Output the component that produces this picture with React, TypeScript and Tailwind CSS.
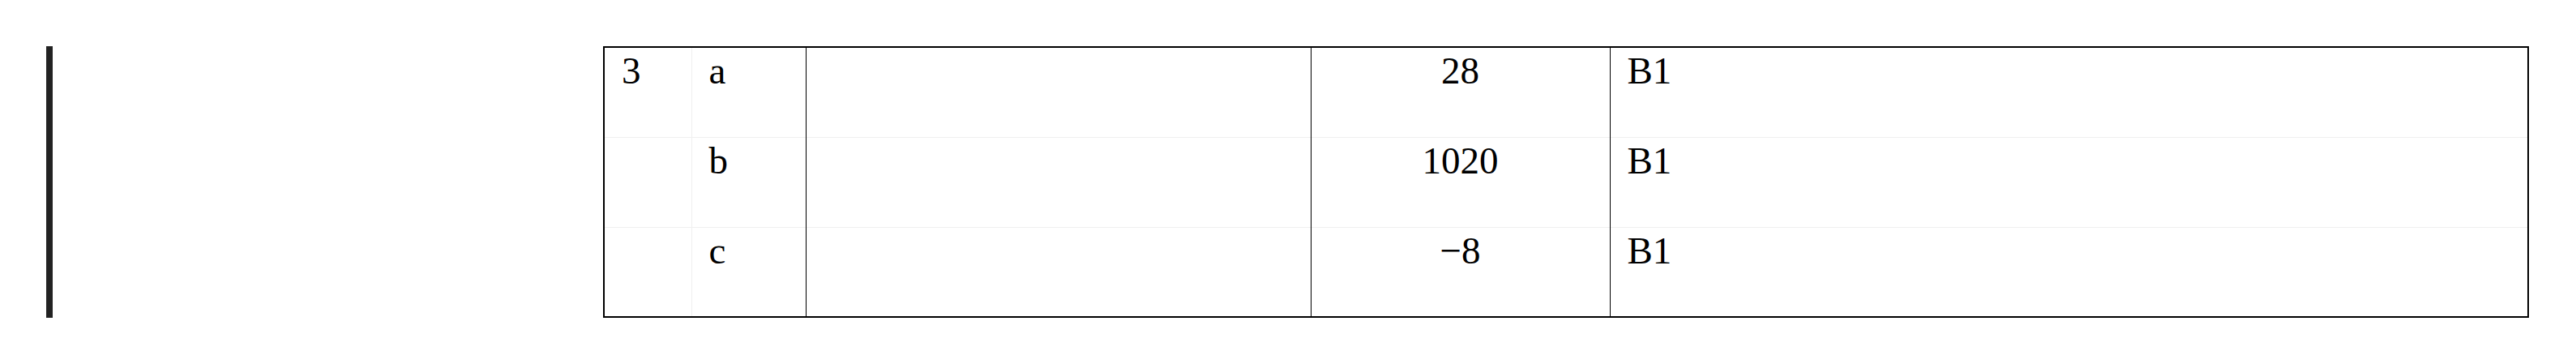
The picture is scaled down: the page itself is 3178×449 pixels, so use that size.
import React from 'react';

interface Row {
  q: string;
  part: string;
  answer: string;
  mark: string;
}

const ROWS: Row[] = [
  { q: '3', part: 'a', answer: '28', mark: 'B1' },
  { q: '', part: 'b', answer: '1020', mark: 'B1' },
  { q: '', part: 'c', answer: '\u22128', mark: 'B1' },
];

export default function App() {
  return (
    <div className="flex items-start bg-white pt-[57px] w-[3178px] h-[449px] font-['Liberation_Serif',serif] text-[47px] text-black">
      <div className="ml-[57px] w-[8px] h-[335px] bg-[#222222] shrink-0" />

      <table className="ml-[679px] w-[2376px] table-fixed border-collapse border-2 border-black">
        <colgroup>
          <col className="w-[108px]" />
          <col className="w-[141px]" />
          <col className="w-[623px]" />
          <col className="w-[369px]" />
          <col />
        </colgroup>
        <tbody>
          {ROWS.map((row, i) => (
            <tr key={i} className="h-[111px] border-t border-[#f0f0f0] first:border-t-0">
              <td className="align-top pl-[21px] pt-[1px] leading-[54px] border-r border-r-[#f0f0f0]">{row.q}</td>
              <td className="align-top pl-[21px] pt-[1px] leading-[54px] border-r border-r-black">{row.part}</td>
              <td className="align-top pt-[1px] leading-[54px] border-r border-r-black" />
              <td className="align-top pt-[1px] leading-[54px] text-center border-r border-r-black">{row.answer}</td>
              <td className="align-top pl-[21px] pt-[1px] leading-[54px]">{row.mark}</td>
            </tr>
          ))}
        </tbody>
      </table>
    </div>
  );
}
